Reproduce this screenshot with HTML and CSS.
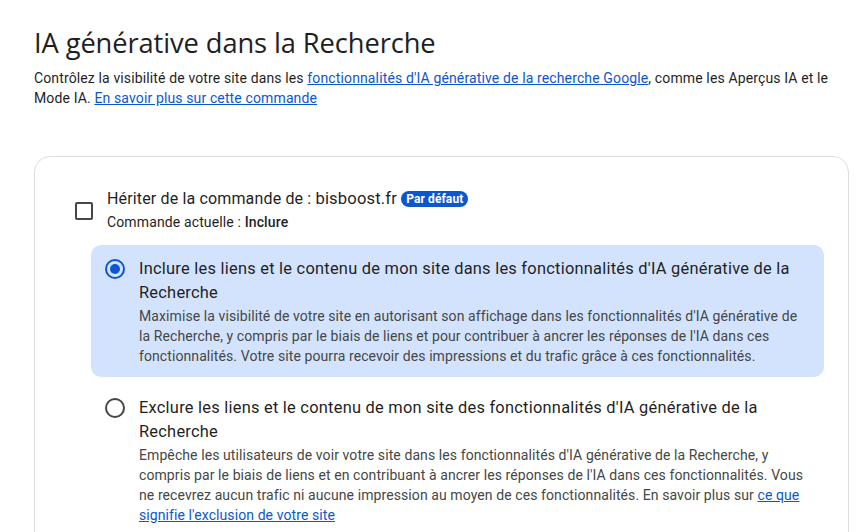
FILE: index.html
```html
<!DOCTYPE html>
<html lang="fr">
<head>
<meta charset="utf-8">
<link rel="stylesheet" href="styles.css">
</head>
<body>
<main class="page">
  <h1 class="title">IA générative dans la Recherche</h1>
  <p class="intro">Contrôlez la visibilité de votre site dans les <a href="#">fonctionnalités d'IA générative de la recherche Google</a>, comme les Aperçus IA et le Mode IA. <a href="#">En savoir plus sur cette commande</a></p>

  <section class="card">
    <div class="inherit">
      <span class="checkbox"></span>
      <div class="inherit-text">
        <div class="inherit-title">Hériter de la commande de : <span class="domain">bisboost.fr</span> <span class="badge">Par défaut</span></div>
        <div class="inherit-sub">Commande actuelle : <strong>Inclure</strong></div>
      </div>
    </div>

    <div class="options">
      <div class="option selected">
        <span class="radio on"><span class="dot"></span></span>
        <div class="option-text">
          <div class="option-title">Inclure les liens et le contenu de mon site dans les fonctionnalités d'IA générative de la Recherche</div>
          <div class="option-desc">Maximise la visibilité de votre site en autorisant son affichage dans les fonctionnalités d'IA générative de la Recherche, y compris par le biais de liens et pour contribuer à ancrer les réponses de l'IA dans ces fonctionnalités. Votre site pourra recevoir des impressions et du trafic grâce à ces fonctionnalités.</div>
        </div>
      </div>
      <div class="option">
        <span class="radio"></span>
        <div class="option-text">
          <div class="option-title">Exclure les liens et le contenu de mon site des fonctionnalités d'IA générative de la Recherche</div>
          <div class="option-desc">Empêche les utilisateurs de voir votre site dans les fonctionnalités d'IA générative de la Recherche, y compris par le biais de liens et en contribuant à ancrer les réponses de l'IA dans ces fonctionnalités. Vous ne recevrez aucun trafic ni aucune impression au moyen de ces fonctionnalités. En savoir plus sur <a href="#">ce que signifie l'exclusion de votre site</a></div>
        </div>
      </div>
    </div>
  </section>
</main>
</body>
</html>
```

FILE: styles.css
```css
html, body {
  margin: 0;
  padding: 0;
  background: #ffffff;
}
body {
  font-family: Roboto, "Liberation Sans", Arial, sans-serif;
  color: #1f1f1f;
  letter-spacing: 0.13px;
}
.page {
  padding: 25px 16px 0 34px;
}
.title {
  margin: 0;
  font-family: "Open Sans", Roboto, sans-serif;
  font-weight: 400;
  font-size: 27.3px;
  line-height: 36px;
  color: #1f1f1f;
  letter-spacing: -0.1px;
}
.intro {
  margin: 7px 0 0 0;
  font-size: 14px;
  line-height: 20px;
  color: #1f1f1f;
}
a {
  color: #0b57d0;
  text-decoration: underline;
}
.card {
  margin-top: 48px;
  border: 1px solid #dadce0;
  border-radius: 16px;
  padding: 30px 24px 0 40px;
  height: 400px;
  box-sizing: border-box;
}
.inherit {
  display: flex;
  align-items: center;
  gap: 14px;
}
.checkbox {
  width: 14px;
  height: 14px;
  border: 2px solid #444746;
  border-radius: 2px;
  flex: none;
  margin-top: 2px;
}
.inherit-title {
  font-size: 16px;
  line-height: 24px;
  color: #1f1f1f;
  letter-spacing: 0.15px;
}
.domain {
  color: #1f1f1f;
  font-size: 16.6px;
}
.badge {
  display: inline-block;
  background: #0b57d0;
  color: #ffffff;
  font-size: 12px;
  font-weight: 700;
  line-height: 16px;
  padding: 0 5px;
  border-radius: 8px;
  vertical-align: 1px;
  letter-spacing: 0.1px;
}
.inherit-sub {
  margin-top: 1px;
  font-size: 14px;
  line-height: 20px;
  color: #1f1f1f;
}
.inherit-sub strong {
  font-weight: 500;
}
.options {
  margin: 13px 0 0 16px;
  display: flex;
  flex-direction: column;
  gap: 7px;
}
.option {
  display: flex;
  align-items: flex-start;
  gap: 14px;
  padding: 12px 14px 11px 14px;
  border-radius: 10px;
}
.option.selected {
  background: #d3e3fd;
}
.radio {
  flex: none;
  width: 16px;
  height: 16px;
  border: 2px solid #444746;
  border-radius: 50%;
  margin-top: 2px;
  display: flex;
  align-items: center;
  justify-content: center;
}
.radio.on {
  border-color: #0b57d0;
}
.dot {
  width: 10px;
  height: 10px;
  border-radius: 50%;
  background: #0b57d0;
}
.option-title {
  font-size: 16.4px;
  line-height: 24px;
  color: #1f1f1f;
  letter-spacing: 0.25px;
}
.option-desc {
  margin-top: 1px;
  font-size: 14px;
  line-height: 20px;
  color: #444746;
  letter-spacing: 0.09px;
}
```
